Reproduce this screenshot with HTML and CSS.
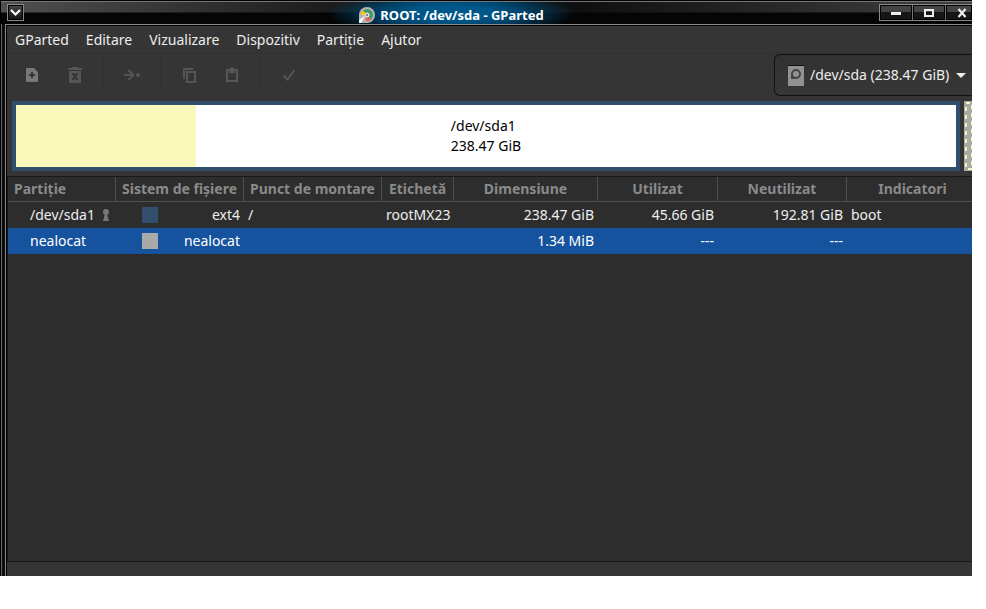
FILE: index.html
```
<!DOCTYPE html>
<html lang="ro">
<head>
    <meta charset="UTF-8">
    <meta name="viewport" content="width=device-width, initial-scale=1.0">
    <title>ROOT: /dev/sda - GParted</title>
    <link rel="stylesheet" href="styles.css">
</head>
<body>
    <div class="window">
        <header class="titlebar">
            <button type="button" class="win-menu" aria-label="Meniu fereastră">
                <svg width="11" height="11" viewBox="0 0 11 11"><path d="M1 3l4.500 4.500L10 3" fill="none" stroke="#fff" stroke-width="2.200"/></svg>
            </button>
            <div class="title">
                <svg width="16" height="16" viewBox="0 0 16 16">
                    <path d="M8 0a8 8 0 1 1 0 16H0V8a8 8 0 0 1 8-8z" fill="#b4b4b4"/>
                    <circle cx="8" cy="8" r="6" fill="#3f9a68"/>
                    <path d="M8 8H2a6 6 0 0 1 2-4.500z" fill="#fc0"/>
                    <path d="M8 8l4 4.500a6 6 0 0 1-5 1.500z" fill="#f55"/>
                    <path d="M8 8H2l-1 5 5 2z" fill="#b4b4b4"/>
                    <circle cx="8" cy="8" r="2.500" fill="#ddd"/>
                    <circle cx="8" cy="8" r="1" fill="#666"/>
                    <path d="M0 16v-3l6-4-4 7z" fill="#fff"/>
                </svg>
                <h1>ROOT: /dev/sda - GParted</h1>
            </div>
            <div class="win-buttons">
                <button type="button" aria-label="Minimizare">
                    <svg width="10" height="10" viewBox="0 0 10 10"><path d="M0 4h10v3H0z" fill="#eee"/></svg>
                </button>
                <button type="button" aria-label="Maximizare">
                    <svg width="10" height="10" viewBox="0 0 10 10"><path d="M1 2h8v6H1z" fill="none" stroke="#eee" stroke-width="2"/></svg>
                </button>
                <button type="button" class="close" aria-label="Închidere">
                    <svg width="10" height="10" viewBox="0 0 10 10"><path d="M1.500 1l7 8M8.500 1l-7 8" stroke="#eee" stroke-width="2.200"/></svg>
                </button>
            </div>
        </header>

        <main class="content">
            <nav class="menubar">
                <a href="#">GParted</a>
                <a href="#">Editare</a>
                <a href="#">Vizualizare</a>
                <a href="#">Dispozitiv</a>
                <a href="#">Partiție</a>
                <a href="#">Ajutor</a>
            </nav>

            <div class="toolbar">
                <button type="button" class="tool tool-new" aria-label="Nou">
                    <svg width="16" height="16" viewBox="0 0 16 16"><path fill-rule="evenodd" d="M3 1h7l4 4v9a1 1 0 0 1-1 1H3a1 1 0 0 1-1-1V2a1 1 0 0 1 1-1zM7 5v2H5v2h2v2h2V9h2V7H9V5z"/></svg>
                </button>
                <button type="button" class="tool" aria-label="Șterge" disabled>
                    <svg width="16" height="16" viewBox="0 0 16 16"><path fill-rule="evenodd" d="M1 1h4V0h6v1h4v2H1zM2 4h12v11a1 1 0 0 1-1 1H3a1 1 0 0 1-1-1zM5 7l2 2.500L5 12v1h2l1-2 1 2h2v-1L9 9.500 11 7V6H9L8 8 7 6H5z"/></svg>
                </button>
                <span class="sep"></span>
                <button type="button" class="tool" aria-label="Redimensionează" disabled>
                    <svg width="16" height="16" viewBox="0 0 16 16"><path d="M0 8h9M4.500 3l5 5-5 5" fill="none" stroke="currentColor" stroke-width="2"/><circle cx="14" cy="8" r="2"/></svg>
                </button>
                <span class="sep"></span>
                <button type="button" class="tool" aria-label="Copiază" disabled>
                    <svg width="16" height="16" viewBox="0 0 16 16"><path d="M3 12V2h9" fill="none" stroke="currentColor" stroke-width="2"/><path fill-rule="evenodd" d="M5 4h10v12H5zM7 6v8h6V6z"/></svg>
                </button>
                <button type="button" class="tool" aria-label="Lipește" disabled>
                    <svg width="16" height="16" viewBox="0 0 16 16"><path fill-rule="evenodd" d="M2 2h4a2 2 0 0 1 4 0h4v13H2zM4 4v9h8V4h-1v2H5V4z"/></svg>
                </button>
                <span class="sep"></span>
                <button type="button" class="tool" aria-label="Aplică" disabled>
                    <svg width="16" height="16" viewBox="0 0 16 16"><path d="M2.500 8.500l4 4L13.500 3" fill="none" stroke="currentColor" stroke-width="2"/></svg>
                </button>

                <label class="device">
                    <svg width="16" height="21" viewBox="0 0 16 21">
                        <path d="M0 0h16v21H0z" fill="#929292"/>
                        <path d="M0 0h16v1H0z" fill="#111"/>
                        <circle cx="8" cy="9" r="4" fill="none" stroke="#444" stroke-width="2"/>
                        <path d="M3 9h2v3h3v2H3z" fill="#444"/>
                    </svg>
                    <select name="device" aria-label="Dispozitiv">
                        <option>/dev/sda (238.47 GiB)</option>
                    </select>
                    <svg width="10" height="5" viewBox="0 0 10 5"><path d="M0 0h10L5 5z" fill="#eee"/></svg>
                </label>
            </div>

            <div class="disk">
                <div class="part">
                    <div class="used" style="width: 19.15%"></div>
                    <p>/dev/sda1<br>238.47 GiB</p>
                </div>
                <div class="unallocated">
                    <svg width="8" height="70" viewBox="0 0 8 70" fill="none" stroke="#f8f8ba" stroke-width="2">
                        <path d="M2 6v62" stroke-dasharray="4 4"/>
                        <path d="M8 4v62" stroke-dasharray="4 4"/>
                        <path d="M2 2h4M4 68h4"/>
                    </svg>
                </div>
            </div>

            <div class="list">
                <table>
                    <colgroup>
                        <col class="c-part"><col class="c-fs"><col class="c-mount"><col class="c-label">
                        <col class="c-size"><col class="c-used"><col class="c-free"><col>
                    </colgroup>
                    <thead>
                        <tr>
                            <th class="left">Partiție</th>
                            <th>Sistem de fișiere</th>
                            <th>Punct de montare</th>
                            <th>Etichetă</th>
                            <th>Dimensiune</th>
                            <th>Utilizat</th>
                            <th>Neutilizat</th>
                            <th class="flags">Indicatori</th>
                        </tr>
                    </thead>
                    <tbody>
                        <tr>
                            <td>
                                <div class="name">/dev/sda1
                                    <svg width="8" height="12" viewBox="0 0 8 12" fill="#777"><circle cx="4" cy="3" r="3"/><path d="M3 5h2l2 7H1z"/></svg>
                                </div>
                            </td>
                            <td><div class="fs"><i class="swatch ext4"></i>ext4</div></td>
                            <td>/</td>
                            <td>rootMX23</td>
                            <td class="num">238.47 GiB</td>
                            <td class="num">45.66 GiB</td>
                            <td class="num">192.81 GiB</td>
                            <td>boot</td>
                        </tr>
                        <tr class="selected">
                            <td><div class="name">nealocat</div></td>
                            <td><div class="fs"><i class="swatch free"></i>nealocat</div></td>
                            <td></td>
                            <td></td>
                            <td class="num">1.34 MiB</td>
                            <td class="num">---</td>
                            <td class="num">---</td>
                            <td></td>
                        </tr>
                    </tbody>
                </table>
            </div>

            <footer class="statusbar"></footer>
        </main>
    </div>
</body>
</html>
```

FILE: styles.css
```
* {
    box-sizing: border-box;
}
body {
    margin: 0;
    padding: 0 14px 33px 0;
    height: 100vh;
    background-color: #fff;
    font-family: "Noto Sans", sans-serif;
    font-size: 14px;
    line-height: 20px;
    color: #eee;
}
button, select {
    margin: 0;
    padding: 0;
    border: none;
    background: none;
    color: inherit;
    font: inherit;
}
svg {
    display: block;
    flex: none;
}

/* window frame */
.window {
    display: flex;
    flex-direction: column;
    height: 100%;
    padding-left: 5px;
    overflow: hidden;
    background: linear-gradient(to right, #000 1px, #666 1px, #666 2px, #0c0c0c 2px);
}
.titlebar {
    display: flex;
    height: 24px;
    margin-left: -5px;
    padding: 3px 0 0 7px;
    border-top: 1px solid #000;
    box-shadow: inset 1px 0 #000, inset 0 1px #777;
    background:
        linear-gradient(to bottom, transparent 11px, #050505 12px),
        linear-gradient(to right, #505050, #101010 42%, #101010 60%, #404040);
}
.win-menu {
    display: flex;
    align-items: center;
    justify-content: center;
    width: 17px;
    height: 17px;
    border: 1px solid #8a8a8a;
    box-shadow: inset 0 0 0 1px #000;
    background: linear-gradient(#4a4a4a, #111);
}
.title {
    display: flex;
    flex: 1;
    align-items: center;
    justify-content: center;
    gap: 5px;
    margin-top: -2px;
    padding-top: 4px;
    background: radial-gradient(ellipse 124px 24px at center, #00578a 30%, #00446c 55%, transparent 100%);
}
.title h1 {
    margin: 0;
    font-size: 13px;
    font-weight: bold;
    color: #fff;
}
.win-buttons {
    display: flex;
    width: 93px;
    height: 17px;
    border: 1px solid #8a8a8a;
    border-right: none;
}
.win-buttons button {
    display: flex;
    flex: none;
    align-items: center;
    justify-content: center;
    width: 33px;
    border-right: 1px solid #777;
    box-shadow: inset 0 0 0 1px #000;
    background: linear-gradient(#444 50%, #161616 50%);
}
.win-buttons .close {
    flex: 1;
    padding-left: 6px;
    border-right: none;
}

.content {
    display: flex;
    flex: 1;
    flex-direction: column;
    min-height: 0;
    border-top: 1px solid #888;
    border-left: 1px solid #888;
    box-shadow: inset 1px 1px #000;
    padding: 1px 0 0 1px;
    background-color: #353535;
    background-clip: padding-box;
}

.menubar {
    display: flex;
    gap: 17px;
    padding: 4px 8px 3px;
    border-bottom: 1px solid #303030;
}
.menubar a {
    color: inherit;
    text-decoration: none;
}

.toolbar {
    display: flex;
    padding-left: 3px;
}
.tool {
    display: flex;
    align-items: center;
    justify-content: center;
    width: 43px;
    height: 42px;
    color: #555;
}
.tool svg {
    fill: currentColor;
}
.tool-new {
    color: #777;
}
.sep {
    width: 1px;
    margin: 4px 6px 4px 7px;
    background-color: #303030;
}
.device {
    display: flex;
    align-items: center;
    margin-left: auto;
    padding: 0 6px 0 13px;
    border: 1px solid #111;
    border-right: none;
    border-radius: 6px 0 0 6px;
    background: linear-gradient(#323232, #373737);
}
.device select {
    width: 142px;
    margin: 0 4px 0 6px;
    appearance: none;
}

/* partition map */
.disk {
    display: flex;
    gap: 4px;
    height: 70px;
    margin: 5px 0 5px 5px;
}
.part {
    position: relative;
    display: flex;
    flex: 1;
    align-items: center;
    justify-content: center;
    border: 4px solid #314e6c;
    background-color: #fff;
    color: #000;
}
.used {
    position: absolute;
    top: 0;
    bottom: 0;
    left: 0;
    background-color: #f8f8ba;
}
.part p {
    position: relative;
    margin: 0;
}
.unallocated {
    background-color: #a9a9a9;
}

/* partition list */
.list {
    flex: 1;
    min-height: 0;
    border: 1px solid #181818;
    border-right: none;
    background-color: #2d2d2d;
}
table {
    width: 100%;
    table-layout: fixed;
    border-collapse: separate;
    border-spacing: 0;
}
.c-part { width: 108px; }
.c-fs { width: 128px; }
.c-mount { width: 138px; }
.c-label { width: 72px; }
.c-size { width: 144px; }
.c-used { width: 120px; }
.c-free { width: 129px; }
th {
    height: 25px;
    padding: 0;
    border-right: 1px solid #505050;
    border-bottom: 1px solid #505050;
    color: #8a8a8a;
    font-weight: bold;
    white-space: nowrap;
}
th.left {
    padding-left: 6px;
    text-align: left;
}
th.flags {
    padding-left: 6px;
    border-right: none;
}
td {
    height: 26px;
    padding: 0 4px;
    white-space: nowrap;
}
.num {
    text-align: right;
}
.name {
    display: flex;
    align-items: center;
    gap: 7px;
    padding-left: 18px;
}
.fs {
    display: flex;
    align-items: center;
    justify-content: space-between;
    padding-left: 22px;
}
.swatch {
    width: 16px;
    height: 16px;
}
.ext4 {
    background-color: #314e6c;
}
.free {
    background-color: #a9a9a9;
}
.selected {
    background-color: #15539e;
    color: #fff;
}
.statusbar {
    height: 14px;
}
```
